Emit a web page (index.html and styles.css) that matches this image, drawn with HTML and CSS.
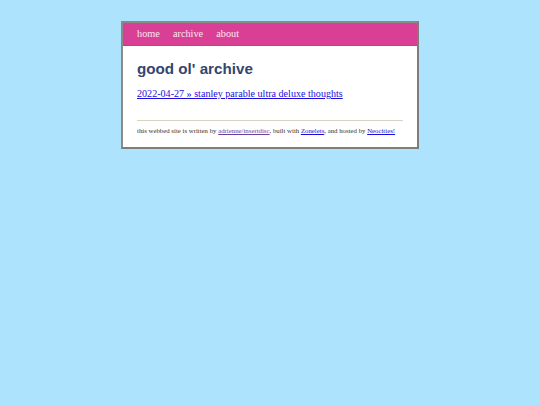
FILE: index.html
```html
<!DOCTYPE html>
<html>
<head>
<meta charset="utf-8">
<link rel="stylesheet" href="styles.css">
</head>
<body>
<div class="container">
  <header class="header">
    <nav class="nav">
      <a href="#">home</a>
      <a href="#">archive</a>
      <a href="#">about</a>
    </nav>
  </header>
  <main class="content">
    <h1 class="title">good ol' archive</h1>
    <ul class="posts">
      <li><a href="#">2022-04-27 » stanley parable ultra deluxe thoughts</a></li>
    </ul>
    <hr class="rule">
    <footer class="footer">this webbed site is written by <a class="visited" href="#">adrienne/insertdisc</a>, built with <a href="#">Zonelets</a>, and hosted by <a href="#">Neocities!</a></footer>
  </main>
</div>
</body>
</html>
```

FILE: styles.css
```css
html, body {
  margin: 0;
  padding: 0;
}
body {
  background: #ade3fd;
  font-family: "Liberation Serif", Georgia, serif;
  padding-top: 21px;
}
.container {
  width: 294px;
  margin-left: 121px;
  background: #fff;
  border: 2px solid #7d7d7d;
  border-top-color: #8a8a8a;
  border-left-color: #8a8a8a;
}
.header {
  background: #d93f95;
  height: 22px;
  display: flex;
  align-items: center;
  padding-left: 14px;
  border-bottom: 1px solid #a0507a;
}
.nav {
  display: flex;
  gap: 13px;
}
.nav a {
  color: #fbe6f2;
  text-decoration: none;
  font-size: 10.3px;
  line-height: 12px;
  margin-top: -1px;
}
.content {
  padding: 13px 14px 13px 14px;
}
.title {
  font-family: "Liberation Sans", Arial, sans-serif;
  font-weight: bold;
  font-size: 15.2px;
  color: #34456f;
  margin: 0 0 5px 0;
  line-height: 19px;
}
.posts {
  list-style: none;
  margin: 0;
  padding: 0;
}
.posts a {
  color: #1a0ddb;
  font-size: 10.1px;
}
.rule {
  border: none;
  border-top: 1px solid #d6d3c0;
  margin: 19px 0 6px 0;
}
.footer {
  font-size: 6.8px;
  color: #333;
}
.footer a {
  color: #1a0ddb;
}
.footer a.visited {
  color: #6a3fa0;
}
```
